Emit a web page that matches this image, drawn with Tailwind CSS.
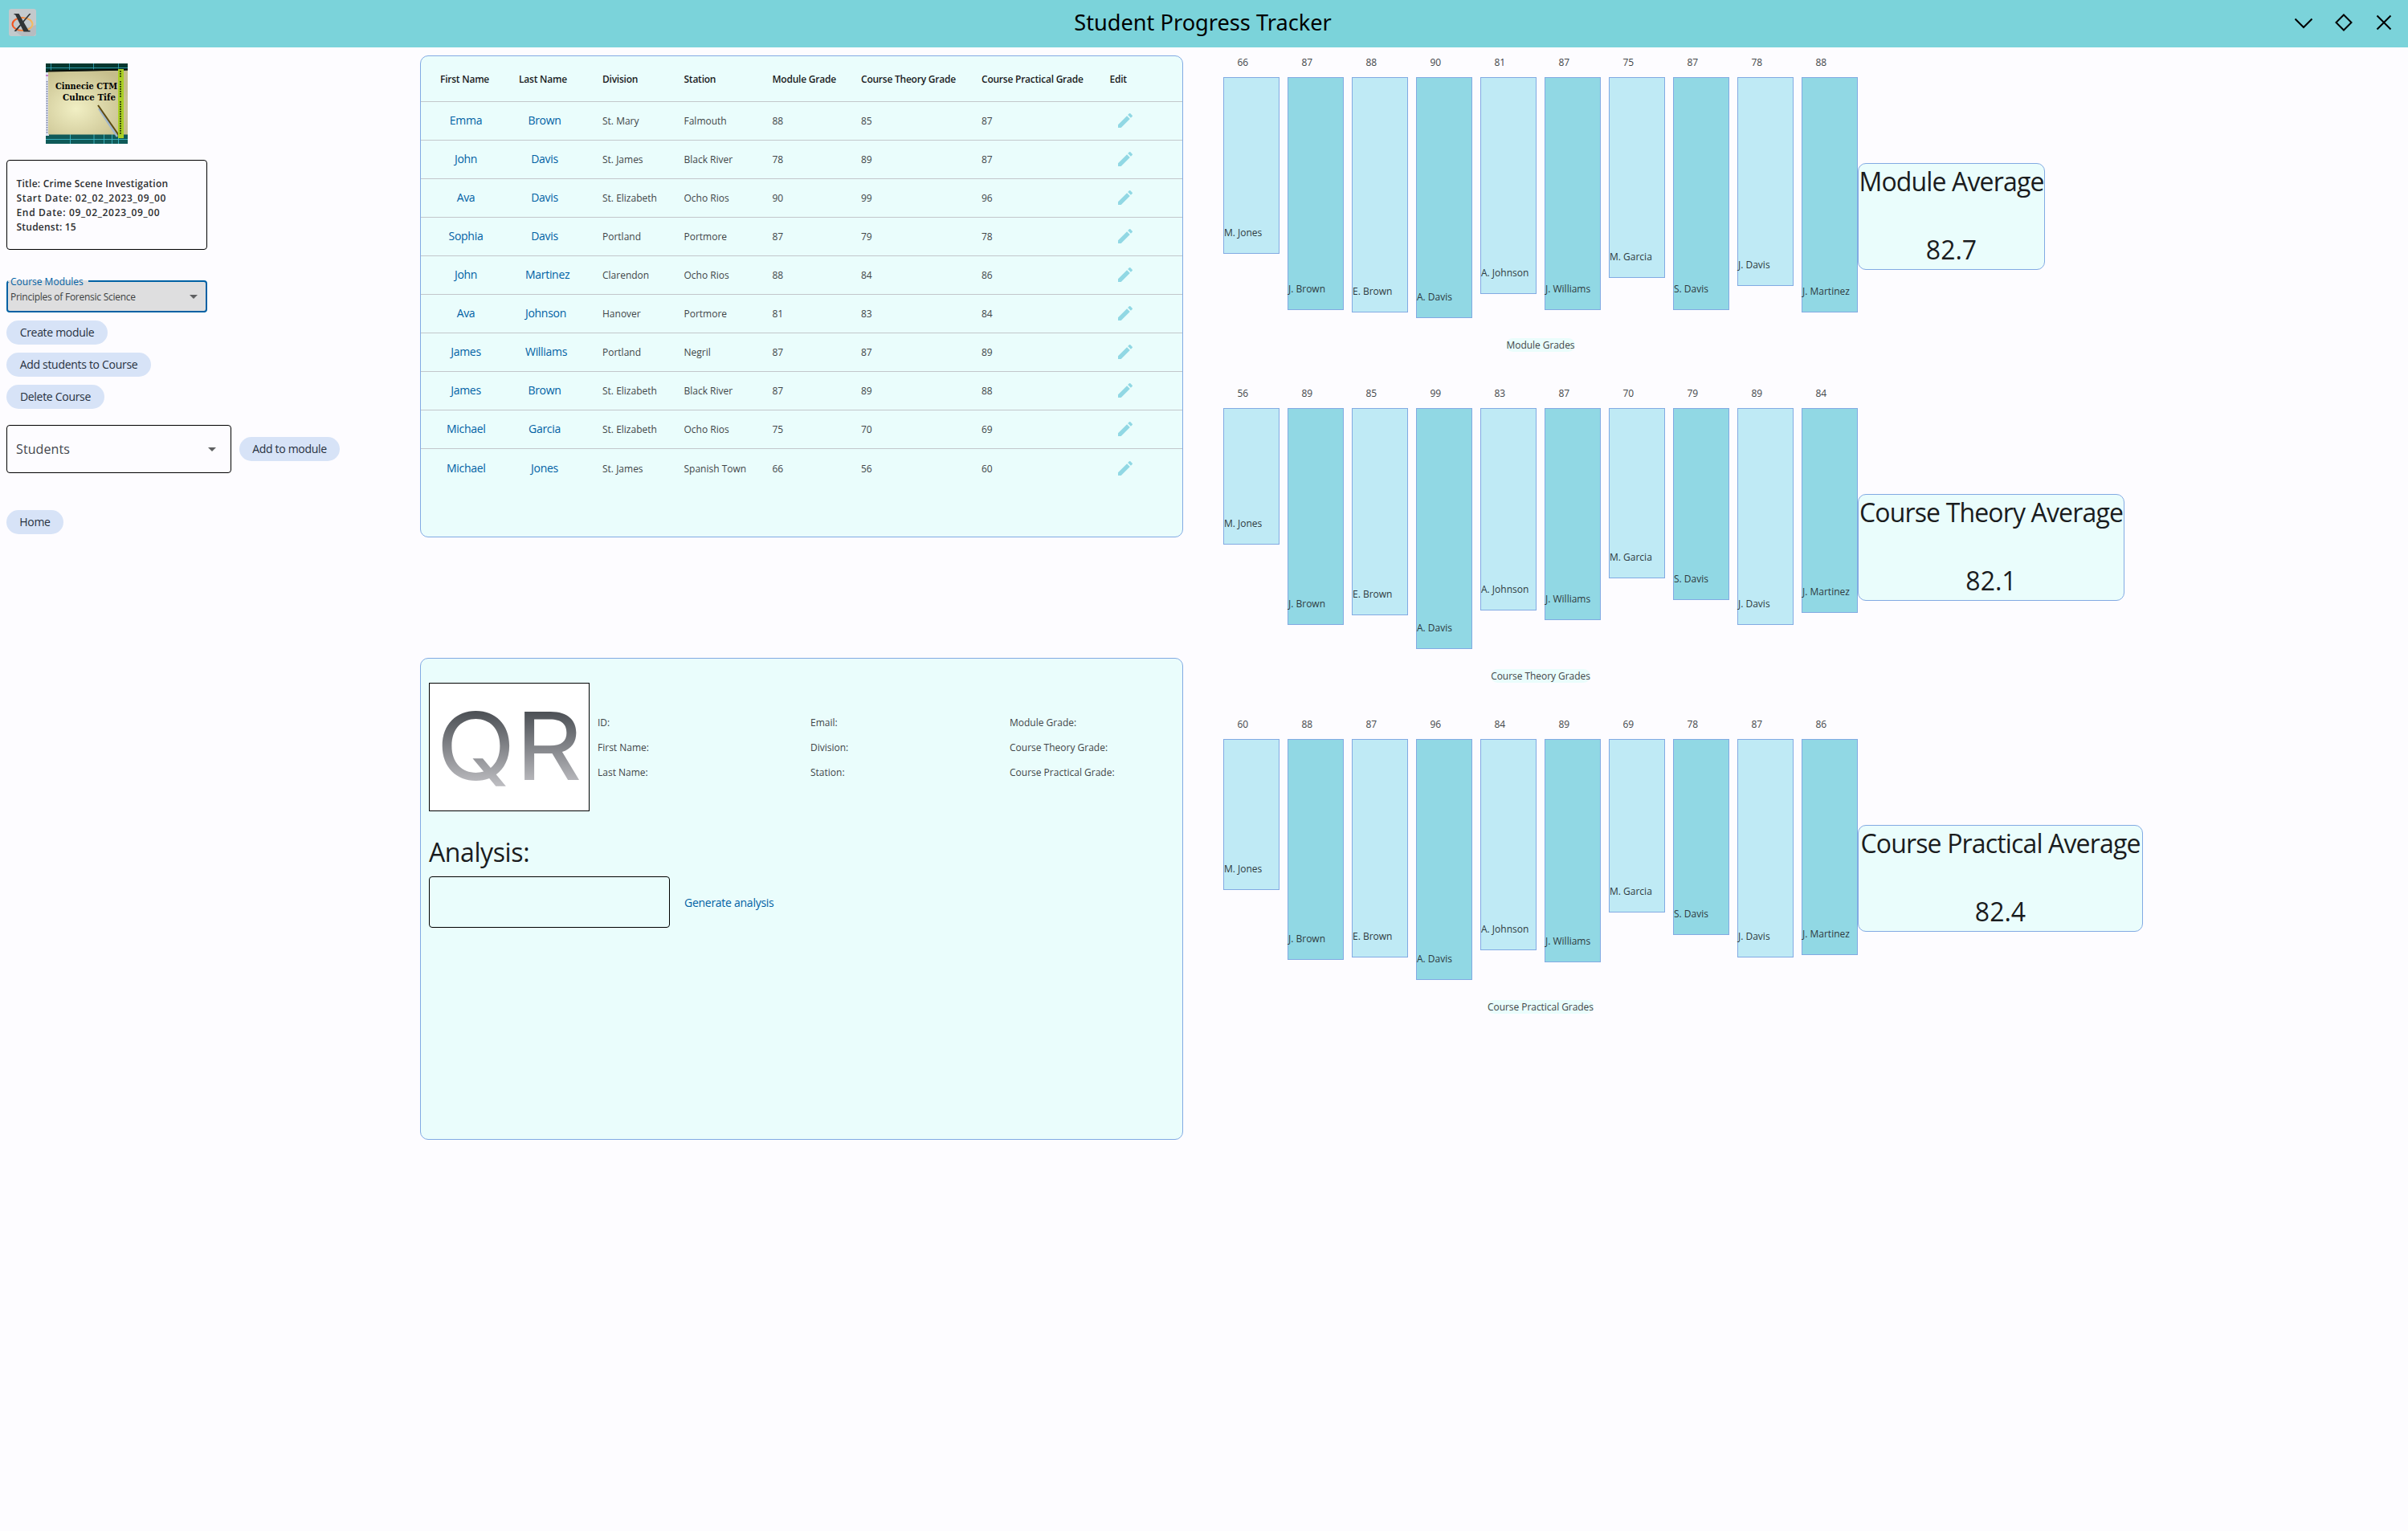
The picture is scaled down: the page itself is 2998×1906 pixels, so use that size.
<!DOCTYPE html>
<html lang="en">
<head>
<meta charset="utf-8">
<title>Student Progress Tracker</title>
<script src="https://cdn.jsdelivr.net/npm/@tailwindcss/browser@4"></script>
</head>
<body class="w-[2998px] h-[1906px] overflow-hidden bg-[#fdfcff] text-[#1a1c1e] font-['Open_Sans',sans-serif]">

<!-- Window title bar -->
<header class="h-[59px] bg-[#7bd3da] flex items-center justify-between pl-[11px] pr-[19px] text-black">
  <svg class="w-[34px] h-[34px] -mt-1" viewBox="0 0 34 34">
    <rect width="34" height="34" rx="3" fill="#c3c9cc"/>
    <path d="M8 28l8 6h15l3-3V20z" fill="#aeb4b7" opacity=".6"/>
    <ellipse cx="17" cy="19" rx="12.5" ry="8" fill="none" stroke="url(#ring)" stroke-width="2"/>
    <path d="M6.500 6h6l12 21h2v1.500h-8L8 7.300H6.500z" fill="#2f3436"/>
    <path d="M25.500 6h2L9 28H6.500z" fill="#2f3436"/>
    <defs><linearGradient id="ring"><stop offset="0" stop-color="#f4511e"/><stop offset="1" stop-color="#f3bd62"/></linearGradient></defs>
  </svg>
  <h1 class="font-['Noto_Sans',sans-serif] text-[27.2px] leading-none ml-[93px] -mt-[3px]">Student Progress Tracker</h1>
  <div class="flex gap-[28px] -mt-[3px]">
    <svg class="w-[22px] h-[22px]" viewBox="0 0 22 22" fill="none" stroke="#000" stroke-width="2"><path d="M0.500 6.500L11 17 21.500 6.500"/></svg>
    <svg class="w-[22px] h-[22px]" viewBox="0 0 22 22" fill="none" stroke="#000" stroke-width="2"><path d="M11 1.500L20.500 11 11 20.500 1.500 11z"/></svg>
    <svg class="w-[22px] h-[22px]" viewBox="0 0 22 22" fill="none" stroke="#000" stroke-width="2"><path d="M2.500 2.500l17 17M19.500 2.500l-17 17"/></svg>
  </div>
</header>

<main class="flex">

  <!-- Course sidebar -->
  <aside class="w-[515px] pl-2 pt-5 flex flex-col items-start">
    <svg class="w-[102px] h-[100px] ml-[49px]" viewBox="0 0 102 100">
      <defs>
        <radialGradient id="paper" cx=".35" cy=".6" r=".7"><stop offset="0" stop-color="#f1efc4"/><stop offset="1" stop-color="#c5bd8b"/></radialGradient>
      </defs>
      <rect width="102" height="12" fill="#04372f"/>
      <rect y="87" width="102" height="13" fill="#0f5a59"/>
      <path d="M0 5.500h102M29.500 0v9M59.500 0v9M90.500 0v7M6.500 0v9" stroke="#3aa9bf" stroke-width=".8"/>
      <path d="M0 94.500h102M30.500 88v12M60 88v12M82.500 88v12M72.500 88v12M90.500 93v7" stroke="#3fb7c4" stroke-width=".9"/>
      <rect y="11" width="4" height="79" fill="#dfe3f3"/>
      <path d="M1.500 22v66" stroke="#6e7896" stroke-width="1.500" stroke-dasharray="1.500 1.500"/>
      <path d="M0 15h3" stroke="#c17fc8" stroke-width="2"/>
      <path d="M3 10L102 8.500V88.500H3z" fill="url(#paper)"/>
      <path d="M3 9.500L102 7.500" stroke="#0b0e0a" stroke-width="2"/>
      <path d="M66 56L89 91" stroke="#9fb6cc" stroke-width="2.500"/>
      <path d="M65 52L92 91" stroke="#5d4a12" stroke-width="2"/>
      <rect x="90" y="7" width="7" height="86" fill="#a9cf24"/>
      <path d="M93 9v9M93 22v20M93 47v42" stroke="#31400c" stroke-width="2" stroke-dasharray="1.700 1.300"/>
      <text x="12" y="32" font-family="DejaVu Serif, serif" font-weight="700" font-size="11.500" textLength="77" lengthAdjust="spacingAndGlyphs" fill="#000">Cinnecie CTM</text>
      <text x="21" y="46" font-family="DejaVu Serif, serif" font-weight="700" font-size="11.500" textLength="66" lengthAdjust="spacingAndGlyphs" fill="#000">Culnce Tife</text>
    </svg>

    <div class="mt-5 w-[250px] h-[112px] rounded border border-black px-[11.500px] pt-[2px] flex flex-col justify-center text-xs leading-[18px] font-semibold tracking-[0.230px] text-[#2c2e30]">
      <p>Title: Crime Scene Investigation</p>
      <p class="tracking-[0.670px]">Start Date: 02_02_2023_09_00</p>
      <p class="tracking-[0.670px]">End Date: 09_02_2023_09_00</p>
      <p>Studenst: 15</p>
    </div>

    <div class="relative mt-[38px] w-[250px] h-10 rounded border-2 border-[#0061a4] bg-[#dededf] flex items-center justify-between pl-[3px] pr-[10px]">
      <span class="absolute -top-[2px] left-0 w-[100px] h-[2px] bg-[#dededf]"></span>
      <span class="absolute -top-[8px] left-[3px] text-xs leading-4 text-[#0061a4]">Course Modules</span>
      <span class="text-xs tracking-[-0.260px] text-[#3c3e41] pt-px">Principles of Forensic Science</span>
      <svg class="w-[10px] h-[5px]" viewBox="0 0 10 5"><path d="M0 0h10L5 5z" fill="#5f6062"/></svg>
    </div>

    <button class="mt-[10px] h-[30px] w-[126px] rounded-full bg-[#d7e3f7] text-sm tracking-[-0.300px] text-[#27313f]">Create module</button>
    <button class="mt-[10px] h-[30px] w-[180px] rounded-full bg-[#d7e3f7] text-sm tracking-[-0.300px] text-[#27313f]">Add students to Course</button>
    <button class="mt-[10px] h-[30px] w-[122px] rounded-full bg-[#d7e3f7] text-sm tracking-[-0.300px] text-[#27313f]">Delete Course</button>

    <div class="mt-5 flex items-center gap-[10px]">
      <div class="w-[280px] h-[60px] rounded border border-black flex items-center justify-between pl-[11px] pr-[18px]">
        <span class="text-base tracking-[0.110px] text-[#43474e]">Students</span>
        <svg class="w-[10px] h-[5px]" viewBox="0 0 10 5"><path d="M0 0h10L5 5z" fill="#5f6062"/></svg>
      </div>
      <button class="h-[30px] w-[125px] rounded-full bg-[#d7e3f7] text-sm tracking-[-0.300px] text-[#27313f]">Add to module</button>
    </div>

    <button class="mt-[46px] h-[30px] w-[71px] rounded-full bg-[#d7e3f7] text-sm tracking-[-0.300px] text-[#27313f]">Home</button>
  </aside>

  <!-- Students table and student details -->
  <section class="w-[966px] pl-2 pt-[10px] flex flex-col gap-[150px]">
    <div class="w-[950px] h-[600px] rounded-[10px] border border-[#82aae3] bg-[#eafdfc]">
      <div class="grid grid-cols-[98px_104px_101.500px_110px_110.500px_150px_159.500px_auto] pl-6 h-[57px] items-center border-b border-[#c3c7cb] text-xs font-semibold tracking-[-0.230px] pt-px">
        <span>First Name</span><span>Last Name</span><span>Division</span><span>Station</span><span>Module Grade</span><span>Course Theory Grade</span><span>Course Practical Grade</span><span>Edit</span>
      </div>
      <div id="rows"></div>
    </div>

    <div class="w-[950px] h-[600px] rounded-[10px] border border-[#82aae3] bg-[#eafdfc] px-[10px] pt-[30px] flex flex-col items-start">
      <div class="flex items-center">
        <div class="w-[200px] h-[160px] border border-black bg-white">
          <svg class="w-[198px] h-[158px]" viewBox="0 0 198 158">
            <defs><linearGradient id="qr" gradientUnits="userSpaceOnUse" x1="0" y1="34" x2="0" y2="125"><stop offset="0" stop-color="#4b4f54"/><stop offset="1" stop-color="#bbbbbf"/></linearGradient></defs>
            <text x="8" y="119.500" font-family="Inter, sans-serif" font-size="117" textLength="182" lengthAdjust="spacingAndGlyphs" fill="url(#qr)">QR</text>
          </svg>
        </div>
        <div class="grid grid-cols-[265px_248px_auto] gap-y-[15px] ml-[10px] mt-[2px] text-xs leading-4 text-[#3f4548]">
          <span>ID:</span><span>Email:</span><span>Module Grade:</span>
          <span>First Name:</span><span>Division:</span><span>Course Theory Grade:</span>
          <span>Last Name:</span><span>Station:</span><span>Course Practical Grade:</span>
        </div>
      </div>
      <h2 class="mt-[31px] text-[32px] leading-10 tracking-[-0.400px]">Analysis:</h2>
      <div class="mt-[10px] flex items-center">
        <div class="w-[300px] h-16 rounded border border-black"></div>
        <span class="ml-[18px] text-sm tracking-[-0.270px] text-[#0061a4] pt-px">Generate analysis</span>
      </div>
    </div>
  </section>

  <!-- Grade charts -->
  <section id="charts" class="pl-[42px] pt-[10px]"></section>
</main>

<script>
const students = [
  ["Emma","Brown","St. Mary","Falmouth",88,85,87],
  ["John","Davis","St. James","Black River",78,89,87],
  ["Ava","Davis","St. Elizabeth","Ocho Rios",90,99,96],
  ["Sophia","Davis","Portland","Portmore",87,79,78],
  ["John","Martinez","Clarendon","Ocho Rios",88,84,86],
  ["Ava","Johnson","Hanover","Portmore",81,83,84],
  ["James","Williams","Portland","Negril",87,87,89],
  ["James","Brown","St. Elizabeth","Black River",87,89,88],
  ["Michael","Garcia","St. Elizabeth","Ocho Rios",75,70,69],
  ["Michael","Jones","St. James","Spanish Town",66,56,60],
];
document.getElementById("rows").innerHTML = students.map(s => `
  <div class="grid grid-cols-[98px_104px_101.500px_110px_110.500px_150px_167px_auto] pl-6 h-12 items-center border-b border-[#c3c7cb] last:border-b-0 text-xs text-[#3f4548] pt-px">
    <span class="justify-self-start min-w-16 px-2 text-center text-sm tracking-[-0.300px] text-[#0061a4] -mt-[2px]">${s[0]}</span>
    <span class="justify-self-start min-w-16 px-2 text-center text-sm tracking-[-0.300px] text-[#0061a4] -mt-[2px]">${s[1]}</span>
    <span>${s[2]}</span><span>${s[3]}</span><span>${s[4]}</span><span>${s[5]}</span><span>${s[6]}</span>
    <svg class="w-6 h-6 -mt-[2px]" viewBox="0 0 24 24" fill="#91d8e4"><path d="M3 17.250V21h3.750L17.810 9.940l-3.750-3.750L3 17.250zM20.710 7.040a1 1 0 0 0 0-1.410l-2.340-2.340a1 1 0 0 0-1.410 0l-1.830 1.830 3.750 3.750 1.830-1.830z"/></svg>
  </div>`).join("");

const names = ["M. Jones","J. Brown","E. Brown","A. Davis","A. Johnson","J. Williams","M. Garcia","S. Davis","J. Davis","J. Martinez"];
const charts = [
  ["Module", "82.7", [66,87,88,90,81,87,75,87,78,88], "w-[233px]"],
  ["Course Theory", "82.1", [56,89,85,99,83,87,70,79,89,84], "w-[332px]"],
  ["Course Practical", "82.4", [60,88,87,96,84,89,69,78,87,86], "w-[355px]"],
];
document.getElementById("charts").innerHTML = charts.map(([title, avg, grades, width]) => {
  const max = Math.max(...grades);
  return `
  <div class="h-[412px] flex items-start">
    <div class="flex flex-col items-center">
      <div class="flex items-start gap-[10px] h-[352px]">
        ${grades.map((g, i) => `
        <div class="w-[70px] text-xs leading-4 text-[#3f4548]">
          <div class="pl-[17.500px] h-[27px] pt-px">${g}</div>
          <div class="border border-[#82aae3] flex items-end pb-[17px] whitespace-nowrap text-[#2e3a40] ${i % 2 ? "bg-[#91d8e4]" : "bg-[#bfeaf5]"}" style="height:${300 * g / max}px">${names[i]}</div>
        </div>`).join("")}
      </div>
      <div class="rounded-full bg-[#eafdfc] text-xs leading-[17px] text-[#3f4548] tracking-[-0.050px]">${title} Grades</div>
    </div>
    <div class="${width} h-[133px] mt-[133.500px] rounded-[10px] border border-[#82aae3] bg-[#eafdfc] flex flex-col items-center justify-between pb-[2px] text-[32px] leading-[44px] whitespace-nowrap">
      <span class="tracking-[-0.850px]">${title} Average</span>
      <span>${avg}</span>
    </div>
  </div>`;
}).join("");
</script>
</body>
</html>
